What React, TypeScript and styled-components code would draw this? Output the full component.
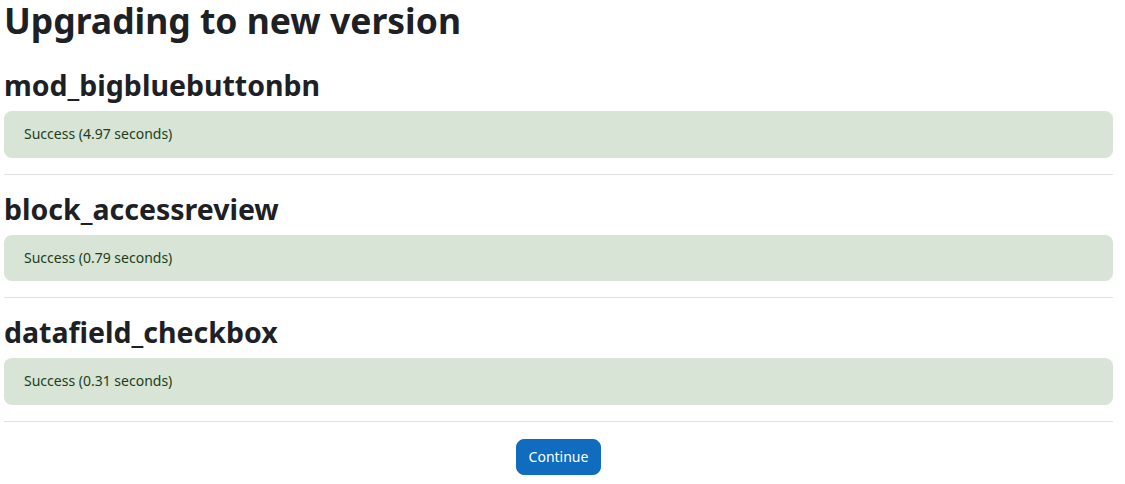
import React from 'react';
import styled, { createGlobalStyle } from 'styled-components';

const GlobalStyle = createGlobalStyle`
  html, body {
    margin: 0;
    padding: 0;
    background: #fff;
  }
  body {
    font-family: "Noto Sans", "Open Sans", "Liberation Sans", sans-serif;
    color: #1d2125;
  }
`;

// Layout
const Page = styled.div`
  padding: 0 12px 0 4px;
`;

const Title = styled.h1`
  margin: 0 0 26px;
  font-size: 35.5px;
  line-height: 41px;
  font-weight: 700;
  color: #1d2125;
`;

const Section = styled.section`
  display: flex;
  flex-direction: column;
`;

const PluginName = styled.h2`
  margin: 0 0 8px;
  font-size: 28.5px;
  line-height: 36px;
  font-weight: 700;
  color: #1d2125;
`;

const Alert = styled.div`
  background: #d7e4d6;
  color: #1c3f1a;
  border-radius: 8px;
  padding: 12px 20px;
  font-size: 14px;
  line-height: 22.5px;
`;

const Divider = styled.hr`
  border: 0;
  border-top: 1px solid #dee2e6;
  margin: 16px 0;
`;

const Actions = styled.div`
  display: flex;
  justify-content: center;
  padding-top: 1px;
`;

const Button = styled.button`
  background: #0f6cbf;
  color: #fff;
  border: 1px solid #0f6cbf;
  border-radius: 8px;
  padding: 0 12px;
  height: 36px;
  font-family: inherit;
  font-size: 14px;
  cursor: pointer;
`;

const results = [
  { name: 'mod_bigbluebuttonbn', time: '4.97' },
  { name: 'block_accessreview', time: '0.79' },
  { name: 'datafield_checkbox', time: '0.31' },
];

export default function App() {
  return (
    <>
      <GlobalStyle />
      <Page>
        <Title>Upgrading to new version</Title>
        {results.map((r) => (
          <Section key={r.name}>
            <PluginName>{r.name}</PluginName>
            <Alert>Success ({r.time} seconds)</Alert>
            <Divider />
          </Section>
        ))}
        <Actions>
          <Button>Continue</Button>
        </Actions>
      </Page>
    </>
  );
}
